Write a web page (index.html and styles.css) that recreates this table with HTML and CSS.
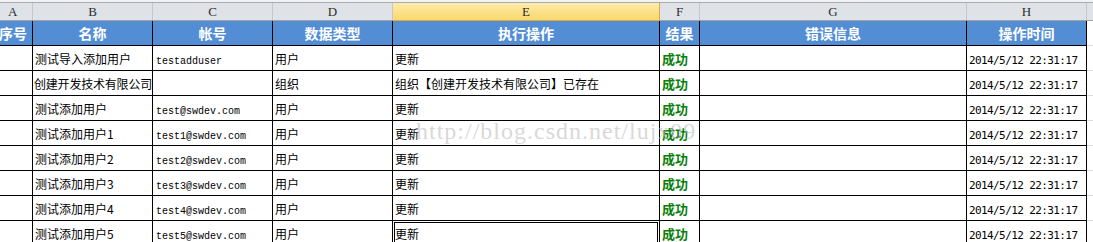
FILE: index.html
```html
<!DOCTYPE html>
<html lang="zh">
<head>
<meta charset="utf-8">
<title>导入结果</title>
<link rel="stylesheet" href="styles.css">
</head>
<body>
<div class="topstrip"></div>
<div class="sheet">
  <table class="grid">
    <colgroup>
      <col class="c-a"><col class="c-b"><col class="c-c"><col class="c-d"><col class="c-e"><col class="c-f"><col class="c-g"><col class="c-h"><col class="c-x">
    </colgroup>
    <thead>
      <tr class="letters">
        <th>A</th><th>B</th><th>C</th><th>D</th><th class="cur">E</th><th>F</th><th>G</th><th>H</th><th class="out"></th>
      </tr>
      <tr class="titles">
        <th>序号</th><th>名称</th><th>帐号</th><th>数据类型</th><th>执行操作</th><th>结果</th><th>错误信息</th><th>操作时间</th><th class="out"></th>
      </tr>
    </thead>
    <tbody>
      <tr><td></td><td>测试导入添加用户</td><td class="mono">testadduser</td><td>用户</td><td>更新</td><td class="ok">成功</td><td></td><td class="time">2014/5/12 22:31:17</td><td class="out"></td></tr>
      <tr><td></td><td class="fit">创建开发技术有限公司</td><td class="mono"></td><td>组织</td><td>组织【创建开发技术有限公司】已存在</td><td class="ok">成功</td><td></td><td class="time">2014/5/12 22:31:17</td><td class="out"></td></tr>
      <tr><td></td><td>测试添加用户</td><td class="mono">test@swdev.com</td><td>用户</td><td>更新</td><td class="ok">成功</td><td></td><td class="time">2014/5/12 22:31:17</td><td class="out"></td></tr>
      <tr><td></td><td>测试添加用户1</td><td class="mono">test1@swdev.com</td><td>用户</td><td>更新</td><td class="ok">成功</td><td></td><td class="time">2014/5/12 22:31:17</td><td class="out"></td></tr>
      <tr><td></td><td>测试添加用户2</td><td class="mono">test2@swdev.com</td><td>用户</td><td>更新</td><td class="ok">成功</td><td></td><td class="time">2014/5/12 22:31:17</td><td class="out"></td></tr>
      <tr><td></td><td>测试添加用户3</td><td class="mono">test3@swdev.com</td><td>用户</td><td>更新</td><td class="ok">成功</td><td></td><td class="time">2014/5/12 22:31:17</td><td class="out"></td></tr>
      <tr><td></td><td>测试添加用户4</td><td class="mono">test4@swdev.com</td><td>用户</td><td>更新</td><td class="ok">成功</td><td></td><td class="time">2014/5/12 22:31:17</td><td class="out"></td></tr>
      <tr><td></td><td>测试添加用户5</td><td class="mono">test5@swdev.com</td><td>用户</td><td class="selected">更新</td><td class="ok">成功</td><td></td><td class="time">2014/5/12 22:31:17</td><td class="out"></td></tr>
    </tbody>
  </table>
  <div class="watermark">http://blog.csdn.net/lujx09</div>
</div>
</body>
</html>
```

FILE: styles.css
```css
html, body {
  margin: 0;
  padding: 0;
  background: #ffffff;
  overflow: hidden;
  width: 1093px;
  height: 242px;
}

.topstrip {
  height: 2px;
  background: #f2f2f2;
  border-bottom: 1px solid #a9acb0;
}

.sheet {
  position: relative;
}

.grid {
  margin-left: -7px;
  border-collapse: collapse;
  table-layout: fixed;
  width: 1133px;
  font-family: "Noto Sans CJK SC", "Noto Sans", sans-serif;
  font-size: 12px;
  color: #000;
}

.c-a { width: 39px; }
.c-b { width: 120px; }
.c-c { width: 120px; }
.c-d { width: 120px; }
.c-e { width: 267px; }
.c-f { width: 40px; }
.c-g { width: 267px; }
.c-h { width: 120px; }
.c-x { width: 40px; }

.letters th {
  height: 17px;
  padding: 0;
  background: #dfe3e8;
  border-right: 1px solid #c4c7cb;
  border-bottom: 1px solid #9fa3a8;
  font-family: "Liberation Serif", serif;
  font-weight: normal;
  font-size: 13px;
  line-height: 17px;
  color: #2c2c2c;
  text-align: center;
}

.letters th.cur {
  background: linear-gradient(#fdebab, #f9d86a);
  border-right: 1px solid #e2a842;
  border-left: 1px solid #e2a842;
  border-bottom: 1px solid #e2a842;
}

.titles th {
  height: 24px;
  padding: 0;
  background: #538ed5;
  color: #ffffff;
  font-weight: bold;
  font-size: 14px;
  line-height: 23px;
  text-align: center;
  border-left: 1px solid #000;
  border-right: 1px solid #000;
  border-bottom: 1px solid #000;
  white-space: nowrap;
  overflow: hidden;
}

.titles th.out {
  background: #ffffff;
  border-left: 1px solid #000;
  border-right: none;
  border-bottom: 1px solid #dadcdd;
}

tbody tr {
  height: 25px;
}

tbody td {
  padding: 6px 0 0 2px;
  border: 1px solid #000;
  white-space: nowrap;
  overflow: hidden;
  line-height: 14px;
  vertical-align: baseline;
}

tbody td.fit {
  padding-left: 1px;
  letter-spacing: -0.2px;
}

tbody td.out {
  border-right: none;
  border-top: 1px solid #dadcdd;
  border-bottom: 1px solid #dadcdd;
}

td.mono {
  font-family: "Liberation Mono", monospace;
  font-size: 10px;
  padding-left: 3px;
}

td.time {
  font-family: "DejaVu Sans Mono", monospace;
  font-size: 11px;
  letter-spacing: -0.6px;
}

td.ok {
  color: #0a800a;
  font-weight: bold;
  font-size: 13px;
}

td.selected {
  box-shadow: inset 0 0 0 1px #ffffff, inset 0 0 0 2px #000000;
}

.watermark {
  position: absolute;
  left: 416px;
  top: 116px;
  font-family: "Liberation Serif", serif;
  font-size: 24px;
  line-height: 24px;
  letter-spacing: 1px;
  color: rgba(190, 190, 190, 0.6);
  white-space: nowrap;
  pointer-events: none;
}
```
